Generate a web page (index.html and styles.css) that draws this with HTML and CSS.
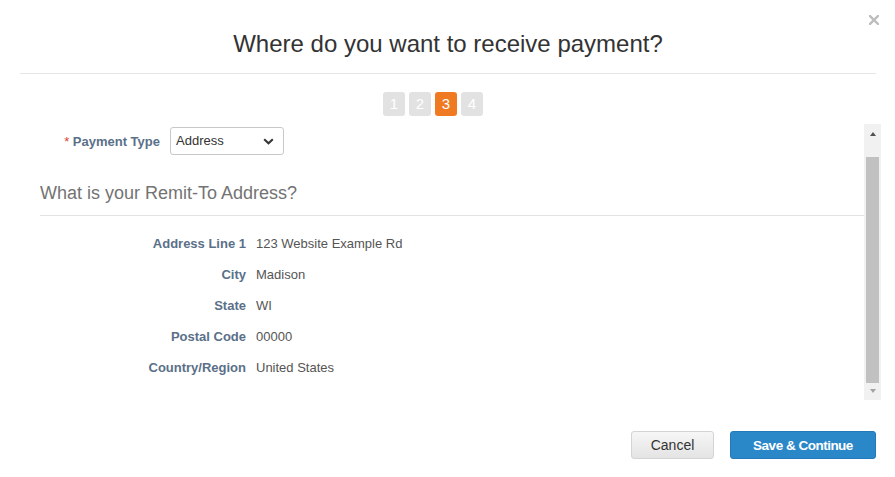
FILE: index.html
```html
<!DOCTYPE html>
<html>
<head>
<meta charset="utf-8">
<link rel="stylesheet" href="styles.css">
</head>
<body>
<div class="modal">
  <button class="close" aria-label="Close">
    <svg width="10" height="10" viewBox="0 0 10 10"><path d="M1 1 L9 9 M9 1 L1 9" stroke="#bdbdbd" stroke-width="2.4" stroke-linecap="square"/></svg>
  </button>
  <div class="header">
    <h1 class="title">Where do you want to receive payment?</h1>
  </div>
  <div class="steps">
    <span class="step">1</span>
    <span class="step">2</span>
    <span class="step active">3</span>
    <span class="step">4</span>
  </div>
  <div class="scroll">
    <div class="content">
      <div class="pay-row">
        <label class="pay-label"><span class="req">*</span> Payment Type</label>
        <div class="select">
          <span>Address</span>
          <svg width="11" height="7" viewBox="0 0 11 7"><path d="M1.2 1.2 L5.5 5.3 L9.8 1.2" fill="none" stroke="#333" stroke-width="2"/></svg>
        </div>
      </div>
      <h2 class="section">What is your Remit-To Address?</h2>
      <div class="details">
        <div class="dl">Address Line 1</div><div class="dv">123 Website Example Rd</div>
        <div class="dl">City</div><div class="dv">Madison</div>
        <div class="dl">State</div><div class="dv">WI</div>
        <div class="dl">Postal Code</div><div class="dv">00000</div>
        <div class="dl">Country/Region</div><div class="dv">United States</div>
      </div>
    </div>
    <div class="scrollbar">
      <div class="arrow up"></div>
      <div class="track"><div class="thumb"></div></div>
      <div class="arrow down"></div>
    </div>
  </div>
  <div class="footer">
    <button class="btn cancel">Cancel</button>
    <button class="btn save">Save &amp; Continue</button>
  </div>
</div>
</body>
</html>
```
FILE: styles.css
```css
html, body {
  margin: 0;
  padding: 0;
  background: #fff;
}
body {
  font-family: "Liberation Sans", Arial, sans-serif;
  color: #333;
}
.modal {
  position: relative;
  width: 895px;
  height: 477px;
}
.close {
  position: absolute;
  left: 869px;
  top: 15px;
  width: 10px;
  height: 10px;
  padding: 0;
  border: 0;
  background: none;
  display: block;
}
.close svg { display: block; }
.header {
  margin: 0 19px 0 20px;
  padding: 30px 0 15px;
  border-bottom: 1px solid #e5e5e5;
}
.title {
  margin: 0;
  font-size: 24px;
  line-height: 28px;
  font-weight: normal;
  text-align: center;
  color: #333;
}
.steps {
  display: flex;
  justify-content: center;
  gap: 4px;
  margin-top: 18px;
  padding-right: 29px;
}
.step {
  width: 22px;
  height: 24px;
  border-radius: 3px;
  background: #e2e2e2;
  color: #fff;
  font-size: 15px;
  line-height: 24px;
  text-align: center;
}
.step.active {
  background: #f07a22;
}
.scroll {
  display: flex;
  height: 276px;
  margin: 8px 14px 0 20px;
}
.content {
  flex: 1;
  overflow: hidden;
}
.pay-row {
  display: grid;
  grid-template-columns: 140px 114px;
  column-gap: 10px;
  align-items: center;
  margin-top: 3px;
}
.pay-label {
  text-align: right;
  font-size: 13px;
  font-weight: bold;
  color: #5a7089;
}
.req {
  color: #e0413a;
  font-weight: normal;
}
.select {
  box-sizing: border-box;
  height: 28px;
  border: 1px solid #c8c8c8;
  border-radius: 3px;
  display: flex;
  align-items: center;
  justify-content: space-between;
  padding: 0 9px 0 5px;
  font-size: 13px;
  color: #333;
}
.select span { margin-top: -2px; }
.select svg { display: block; margin-top: 1px; }
.section {
  margin: 28px 0 0 20px;
  padding-bottom: 12px;
  border-bottom: 1px solid #e2e2e2;
  font-size: 18px;
  line-height: 20px;
  font-weight: normal;
  color: #737373;
}
.details {
  display: grid;
  grid-template-columns: 226px 1fr;
  column-gap: 10px;
  margin-top: 12px;
  font-size: 13px;
  line-height: 31px;
}
.dl {
  text-align: right;
  font-weight: bold;
  color: #5a7089;
}
.dv {
  color: #555;
}
.scrollbar {
  width: 17px;
  background: #f1f1f1;
  display: flex;
  flex-direction: column;
  align-items: center;
}
.arrow {
  width: 0;
  height: 0;
  border-left: 3.5px solid transparent;
  border-right: 3.5px solid transparent;
}
.arrow.up {
  margin: 8px 0 0;
  border-bottom: 4px solid #505050;
}
.track {
  flex: 1;
  width: 100%;
  padding: 21px 2px 0;
  box-sizing: border-box;
}
.thumb {
  height: 226px;
  background: #c1c1c1;
}
.arrow.down {
  margin: 0 0 7px;
  border-top: 4px solid #a3a3a3;
}
.footer {
  display: flex;
  justify-content: flex-end;
  gap: 16px;
  margin: 31px 19px 0 20px;
}
.btn {
  box-sizing: border-box;
  height: 28px;
  border-radius: 3px;
  font-family: "Liberation Sans", Arial, sans-serif;
  font-size: 14px;
  padding: 0;
}
.cancel {
  width: 83px;
  border: 1px solid #d4d4d4;
  background: linear-gradient(#f6f6f6, #e4e4e4);
  color: #333;
}
.save {
  width: 146px;
  border: 1px solid #2479b8;
  background: #2a87c8;
  color: #fff;
  font-weight: bold;
  font-size: 13.5px;
  letter-spacing: -0.5px;
}
```
